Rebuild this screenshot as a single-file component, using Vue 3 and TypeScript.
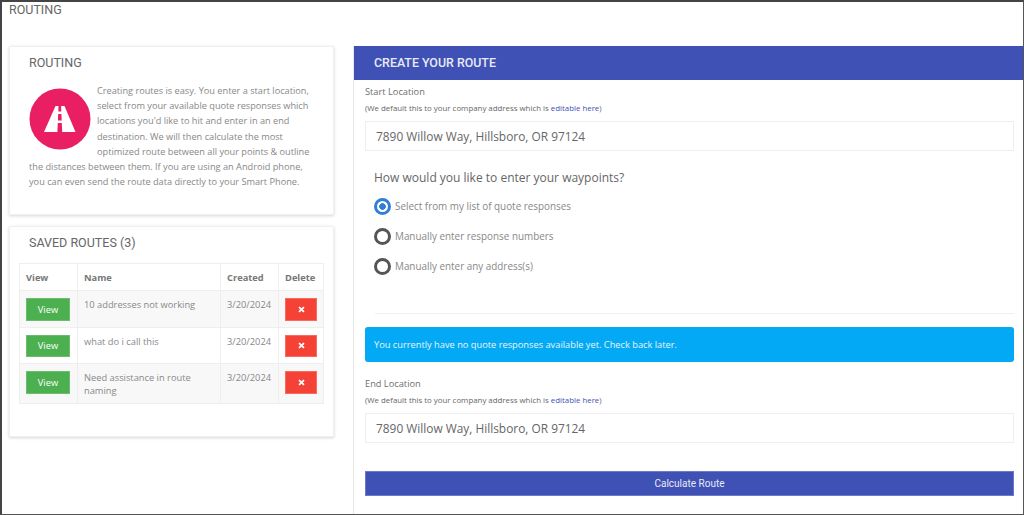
<script setup lang="ts">
interface RouteRow { name: string; created: string }
const routes: RouteRow[] = [
  { name: '10 addresses not working', created: '3/20/2024' },
  { name: 'what do i call this', created: '3/20/2024' },
  { name: 'Need assistance in route naming', created: '3/20/2024' },
]
const options: string[] = [
  'Select from my list of quote responses',
  'Manually enter response numbers',
  'Manually enter any address(s)',
]
const address = '7890 Willow Way, Hillsboro, OR 97124'
</script>

<template>
  <div class="shell">
    <div class="page-title">ROUTING</div>
    <div class="columns">
      <div class="left">
        <section class="card intro">
          <h2 class="card-title">ROUTING</h2>
          <div class="intro-body">
            <svg class="road" viewBox="0 0 62 62" aria-hidden="true">
              <circle cx="31" cy="31" r="30.5" fill="#e91e63" />
              <path d="M26.5 18H35.5L46.5 44H15Z" fill="#fff" />
              <path d="M29.5 18H32.1L32.3 23.5H29.3ZM29.2 26H32.4L32.7 32.5H28.9ZM28.8 35H32.8L33.2 44H28.4Z" fill="#e91e63" />
            </svg>
            Creating routes is easy. You enter a start location, select from your available quote responses which locations you'd like to hit and enter in an end destination. We will then calculate the most optimized route between all your points &amp; outline the distances between them. If you are using an Android phone, you can even send the route data directly to your Smart Phone.
          </div>
        </section>
        <section class="card saved">
          <h2 class="card-title">SAVED ROUTES (3)</h2>
          <table class="routes">
            <thead>
              <tr>
                <th class="c-view">View</th>
                <th class="c-name">Name</th>
                <th class="c-created">Created</th>
                <th class="c-delete">Delete</th>
              </tr>
            </thead>
            <tbody>
              <tr v-for="r in routes" :key="r.name">
                <td><button class="btn-view" type="button">View</button></td>
                <td>{{ r.name }}</td>
                <td>{{ r.created }}</td>
                <td>
                  <button class="btn-del" type="button" aria-label="Delete">
                    <svg viewBox="0 0 8 8" width="7" height="7" aria-hidden="true">
                      <path d="M1.2 1.2L6.8 6.8M6.8 1.2L1.2 6.8" stroke="#fff" stroke-width="2" />
                    </svg>
                  </button>
                </td>
              </tr>
            </tbody>
          </table>
        </section>
      </div>

      <main class="right">
        <header class="banner">CREATE YOUR ROUTE</header>
        <div class="form">
          <div class="label first">Start Location</div>
          <div class="hint">(We default this to your company address which is <a class="link">editable here</a>)</div>
          <div class="field">{{ address }}</div>

          <div class="question">How would you like to enter your waypoints?</div>
          <div class="radios">
            <div v-for="(o, i) in options" :key="o" class="radio-row">
              <span class="radio" :class="{ on: i === 0 }"></span>
              <span>{{ o }}</span>
            </div>
          </div>
          <div class="rule"></div>

          <div class="alert">You currently have no quote responses available yet. Check back later.</div>

          <div class="label">End Location</div>
          <div class="hint">(We default this to your company address which is <a class="link">editable here</a>)</div>
          <div class="field">{{ address }}</div>

          <button class="calc" type="button">Calculate Route</button>
        </div>
      </main>
    </div>
  </div>
</template>

<style>
html, body { margin: 0; background: #fff; }
</style>

<style scoped>
.shell {
  box-sizing: border-box;
  width: 1024px;
  height: 515px;
  overflow: hidden;
  border-top: 2px solid #444;
  border-left: 2px solid #444;
  border-right: 1px solid #555;
  border-bottom: 1px solid #555;
  background: #fff;
  color: #777;
  font-family: "Open Sans", sans-serif;
}
.page-title {
  height: 44px;
  padding-left: 7px;
  font: 12.5px/15px Roboto, sans-serif;
  color: #666;
}
.columns {
  display: flex;
  height: 468px;
}
.left {
  width: 325px;
  margin-left: 7px;
  display: flex;
  flex-direction: column;
  gap: 11px;
  flex: none;
}
.card {
  box-sizing: border-box;
  background: #fff;
  border: 1px solid #f0f0f0;
  box-shadow: 0 1px 3px rgba(0, 0, 0, 0.16);
}
.intro { height: 169px; padding: 8px 19px 0; }
.saved { height: 211px; padding: 8px 10px 0 9px; }
.card-title {
  margin: 0;
  font: 400 12.5px/16px Roboto, sans-serif;
  color: #666;
}
.saved .card-title { padding-left: 10px; margin-bottom: 12px; }
.intro-body {
  margin-top: 12px;
  font-size: 9.2px;
  line-height: 15.2px;
  color: #888;
}
.road {
  float: left;
  width: 62px;
  height: 62px;
  margin: 5px 6px 0 0;
}
.routes {
  width: 305px;
  table-layout: fixed;
  border-collapse: collapse;
  font-size: 9.3px;
  line-height: 13px;
  color: #888;
}
.routes th, .routes td {
  box-sizing: border-box;
  border: 1px solid #eee;
  padding: 7px 6px 6px;
  text-align: left;
  vertical-align: top;
}
.routes th {
  height: 26.5px;
  font-weight: 700;
  color: #777;
}
.c-view { width: 58px; }
.c-created { width: 58px; }
.c-delete { width: 45px; }
.routes tbody tr:nth-child(odd) { background: #f8f8f8; }
.btn-view {
  display: block;
  width: 44px;
  height: 22.5px;
  padding: 0;
  border: 1px solid #6cbb6f;
  background: #4caf50;
  color: #fff;
  font: 9.3px "Open Sans", sans-serif;
}
.btn-del {
  display: flex;
  align-items: center;
  justify-content: center;
  width: 32px;
  height: 22.5px;
  padding: 0;
  border: 1px solid #fb6a5f;
  background: #f44336;
}
.right {
  flex: 1;
  margin-left: 19px;
  border-left: 1px solid #e8e8e8;
}
.banner {
  height: 34px;
  padding-left: 20px;
  background: #3f51b5;
  color: #e8eaf6;
  font: 500 12.4px/33px Roboto, sans-serif;
}
.form {
  padding: 0 9px 0 11px;
}
.label {
  font-size: 9.25px;
  line-height: 13px;
  color: #6f6f6f;
  margin-top: 15px;
}
.label.first { margin-top: 5px; }
.hint {
  margin-top: 5px;
  font-size: 7.87px;
  line-height: 11px;
  color: #666;
}
.link { color: #3f51b5; }
.field {
  box-sizing: border-box;
  height: 30px;
  margin-top: 7px;
  padding-left: 10px;
  border: 1px solid #eee;
  font-size: 11.9px;
  line-height: 28px;
  color: #666;
}
.question {
  margin: 18px 0 0 9px;
  font-size: 12px;
  line-height: 18px;
  color: #666;
}
.radios {
  margin: 4px 0 0 9px;
  display: flex;
  flex-direction: column;
}
.radio-row {
  display: flex;
  align-items: center;
  gap: 4px;
  height: 30px;
  font-size: 9.9px;
  color: #888;
}
.radio {
  box-sizing: border-box;
  width: 17px;
  height: 17px;
  border: 3px solid #555;
  border-radius: 50%;
  flex: none;
  background: #fff;
}
.radio.on {
  border-color: #2f7fd8;
  background: radial-gradient(circle, #2f7fd8 0 3px, #fff 3.6px);
}
.rule {
  height: 1px;
  margin: 32px 0 0 10px;
  background: #f0f0f0;
}
.alert {
  box-sizing: border-box;
  height: 35px;
  margin-top: 13px;
  padding-left: 9px;
  border-radius: 3px;
  background: #03a9f4;
  color: #e6f6fe;
  font-size: 9.27px;
  line-height: 35px;
}
.calc {
  display: block;
  width: 100%;
  height: 25px;
  margin-top: 28px;
  padding: 0;
  border: 1px solid #6b79c8;
  background: #3f51b5;
  color: #e8eaf6;
  font: 400 10px Roboto, sans-serif;
}
</style>
